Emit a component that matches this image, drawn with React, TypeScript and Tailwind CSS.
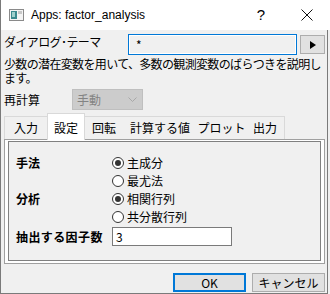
import React from 'react';

// タブ定義（幅は参照画像から）
const tabs = [
  { name: '入力', w: 'w-[43px]' },
  { name: '設定', w: 'w-[38px]', active: true },
  { name: '回転', w: 'w-[38px]' },
  { name: '計算する値', w: 'w-[74px]' },
  { name: 'プロット', w: 'w-[49px]' },
  { name: '出力', w: 'w-[39px]' },
];

const Radio = ({ label, checked }: { label: string; checked?: boolean }) => (
  <div className="flex items-center h-[18px] gap-[3px]">
    <span className="w-[12px] h-[12px] rounded-full border border-[#333333] bg-white flex items-center justify-center">
      {checked && <span className="w-[6px] h-[6px] rounded-full bg-[#333333]" />}
    </span>
    <span className="text-[12px] leading-[18px]">{label}</span>
  </div>
);

export default function App() {
  return (
    <div className="w-[330px] h-[294px] bg-[#f0f0f0] font-['Noto_Sans_CJK_JP',sans-serif] text-black overflow-hidden">
      {/* タイトルバー */}
      <div className="h-[30px] bg-white flex items-center border-l border-[#7a7a7a]">
        <svg width="15" height="12" viewBox="0 0 15 12" className="ml-[8px]">
          <rect x="0.5" y="0.5" width="14" height="11" fill="#f4f4f4" stroke="#8a8a8a" />
          <rect x="2" y="2" width="6" height="8" fill="#3b8a8e" />
          <rect x="3" y="3" width="3" height="5" fill="#9fd0cc" />
          <rect x="9" y="2" width="4" height="3" fill="#c8c8c8" />
        </svg>
        <span className="ml-[7px] text-[12px] font-['Liberation_Sans',sans-serif]">Apps: factor_analysis</span>
        <div className="flex-1" />
        <div className="w-[46px] h-[30px] flex items-center justify-center text-[15px] font-['Liberation_Sans',sans-serif]">
          ?
        </div>
        <div className="w-[46px] h-[30px] flex items-center justify-center">
          <svg width="12" height="12" viewBox="0 0 12 12">
            <path d="M0.5 0.5 L11.5 11.5 M11.5 0.5 L0.5 11.5" stroke="#111" strokeWidth="1" />
          </svg>
        </div>
      </div>

      {/* 本体 */}
      <div className="w-[328px] h-[264px] border-x border-b border-[#7a7a7a] pl-[3px] text-[12px]">
        <div className="flex items-start pt-[4px] h-[26px]">
          <span className="w-[124px] leading-[14px] pt-[1px] tracking-[-0.6px]">ダイアログ･テーマ</span>
          <div className="w-[169px] h-[21px] border border-[#0078d7]">
            <div className="h-full border border-white bg-[#f0f0f0] pl-[6px] leading-[17px]">*</div>
          </div>
          <button className="ml-[3px] mt-[1px] w-[25px] h-[19px] border border-[#adadad] bg-[#e1e1e1] flex items-center justify-center">
            <svg width="6" height="8" viewBox="0 0 6 8">
              <path d="M0 0 L6 4 L0 8 Z" fill="#000" />
            </svg>
          </button>
        </div>

        <div className="mt-[1px] tracking-[-0.65px] whitespace-nowrap">
          <div className="h-[14px] leading-[14px]">少数の潜在変数を用いて、多数の観測変数のばらつきを説明し</div>
          <div className="h-[14px] leading-[14px]">ます。</div>
        </div>

        <div className="flex items-center mt-[4px] h-[21px]">
          <span className="w-[68px]">再計算</span>
          <div className="w-[71px] h-[21px] border border-[#bfbfbf] bg-[#cccccc] flex items-center pl-[4px] text-[#838383]">
            <span>手動</span>
            <svg width="9" height="5" viewBox="0 0 9 5" className="ml-auto mr-[5px]">
              <path d="M0.5 0.5 L4.5 4.5 L8.5 0.5" stroke="#a8a8a8" fill="none" />
            </svg>
          </div>
        </div>

        {/* タブ */}
        <div className="flex items-end h-[26px] mt-[3px]">
          {tabs.map((t, i) =>
            t.active ? (
              <div
                key={t.name}
                className={`${t.w} h-[27px] mb-[-1px] relative z-10 bg-white border-x border-t border-[#d9d9d9] flex items-center justify-center pt-[1px]`}
              >
                {t.name}
              </div>
            ) : (
              <div
                key={t.name}
                className={`${t.w} h-[23px] border-t border-[#d9d9d9] ${i === 0 ? 'border-l' : ''} ${
                  i === tabs.length - 1 ? 'border-r' : ''
                } flex items-center justify-center`}
              >
                {t.name}
              </div>
            )
          )}
        </div>

        {/* タブパネル */}
        <div className="w-[321px] h-[125px] border border-[#a0a0a0] bg-white px-[3px] pt-[1px]">
          <div className="h-[120px] border border-[#808080] bg-[#f0f0f0] pl-[7px] pt-[12px]">
            <div className="flex">
              <span className="w-[96px] font-bold leading-[18px]">手法</span>
              <div>
                <Radio label="主成分" checked />
                <Radio label="最尤法" />
              </div>
            </div>
            <div className="flex">
              <span className="w-[96px] font-bold leading-[18px]">分析</span>
              <div>
                <Radio label="相関行列" checked />
                <Radio label="共分散行列" />
              </div>
            </div>
            <div className="flex items-center mt-[1px]">
              <span className="w-[96px] font-bold tracking-[0.4px]">抽出する因子数</span>
              <div className="w-[120px] h-[19px] border border-[#7a7a7a] bg-white pl-[3px] leading-[17px]">3</div>
            </div>
          </div>
        </div>

        {/* ボタン */}
        <div className="flex justify-end gap-[6px] mt-[9px] pr-[2px]">
          <button className="w-[73px] h-[19px] border-2 border-[#0078d7] bg-[#e1e1e1] leading-[15px]">OK</button>
          <button className="w-[73px] h-[19px] border border-[#adadad] bg-[#e1e1e1] leading-[17px]">キャンセル</button>
        </div>
      </div>
    </div>
  );
}
